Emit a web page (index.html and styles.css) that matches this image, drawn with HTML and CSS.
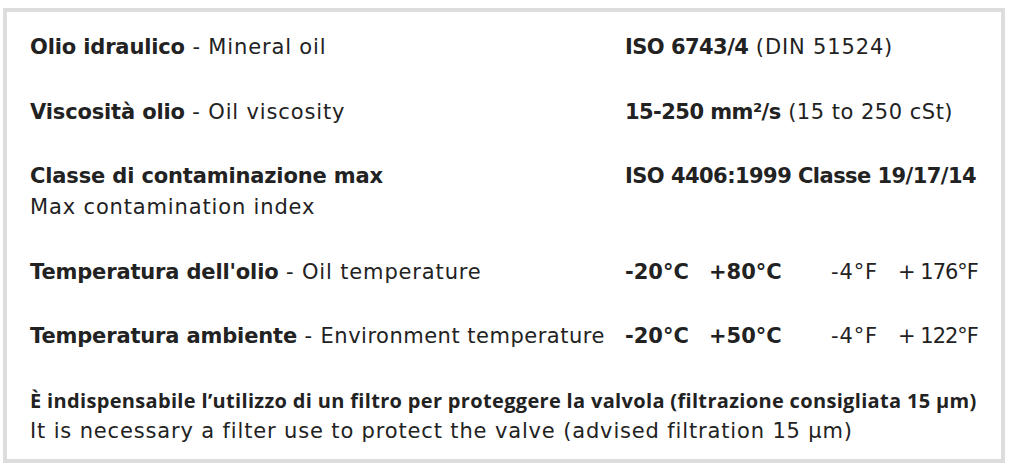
FILE: index.html
```html
<!DOCTYPE html>
<html lang="it">
<head>
<meta charset="utf-8">
<title>Specifiche olio</title>
<link rel="stylesheet" href="styles.css">
</head>
<body>
<div class="box">
  <div class="row">
    <div class="lab"><b>Olio idraulico</b> - Mineral oil</div>
    <div class="val"><b>ISO 6743/4</b> (DIN 51524)</div>
  </div>
  <div class="row">
    <div class="lab"><b>Viscosità olio</b> - Oil viscosity</div>
    <div class="val"><b>15-250 mm²/s</b> <span class="tight">(15 to 250 cSt)</span></div>
  </div>
  <div class="row">
    <div class="lab"><b>Classe di contaminazione max</b><br>Max contamination index</div>
    <div class="val"><b>ISO 4406:1999 Classe 19/17/14</b></div>
  </div>
  <div class="row">
    <div class="lab"><b>Temperatura dell'olio</b> - Oil temperature</div>
    <div class="val temps"><b>-20°C</b><b>+80°C</b><span>-4°F</span><span class="hi">+ 176°F</span></div>
  </div>
  <div class="row">
    <div class="lab"><b>Temperatura ambiente</b> - <span class="tight">Environment temperature</span></div>
    <div class="val temps"><b>-20°C</b><b>+50°C</b><span>-4°F</span><span class="hi">+ 122°F</span></div>
  </div>
  <div class="note">
    <div class="note-it">È indispensabile l’utilizzo di un filtro per proteggere la valvola (filtrazione consigliata 15 µm)</div>
    <div class="note-en">It is necessary a filter use to protect the valve (advised filtration 15 µm)</div>
  </div>
</div>
</body>
</html>
```

FILE: styles.css
```css
html, body {
  margin: 0;
  padding: 0;
  background: #ffffff;
}
body {
  padding: 8px 0 0 3px;
  font-family: "DejaVu Sans", "Open Sans", sans-serif;
  color: #222222;
  font-size: 21px;
  line-height: 31px;
  letter-spacing: 0.85px;
}
.box {
  box-sizing: border-box;
  width: 1002px;
  height: 455px;
  border: 4px solid #dddddd;
  padding: 20px 10px 0 23px;
  display: flex;
  flex-direction: column;
  gap: 33.5px;
  white-space: nowrap;
}
.row {
  display: grid;
  grid-template-columns: 595px 1fr;
}
b {
  font-weight: 700;
  letter-spacing: -0.15px;
}
.tight {
  letter-spacing: 0.5px;
}
.val b {
  letter-spacing: -0.55px;
}
.temps {
  display: grid;
  grid-template-columns: 84px 122px 67px auto;
}
.temps b {
  letter-spacing: 0;
}
.temps .hi {
  letter-spacing: -1px;
}
.note {
  display: flex;
  flex-direction: column;
}
.note-it {
  font-family: "Open Sans", Roboto, sans-serif;
  font-size: 20px;
  font-weight: 700;
  letter-spacing: 0.33px;
  line-height: 30.5px;
}
.note-en {
  line-height: 30.5px;
  letter-spacing: 0.85px;
}
```
